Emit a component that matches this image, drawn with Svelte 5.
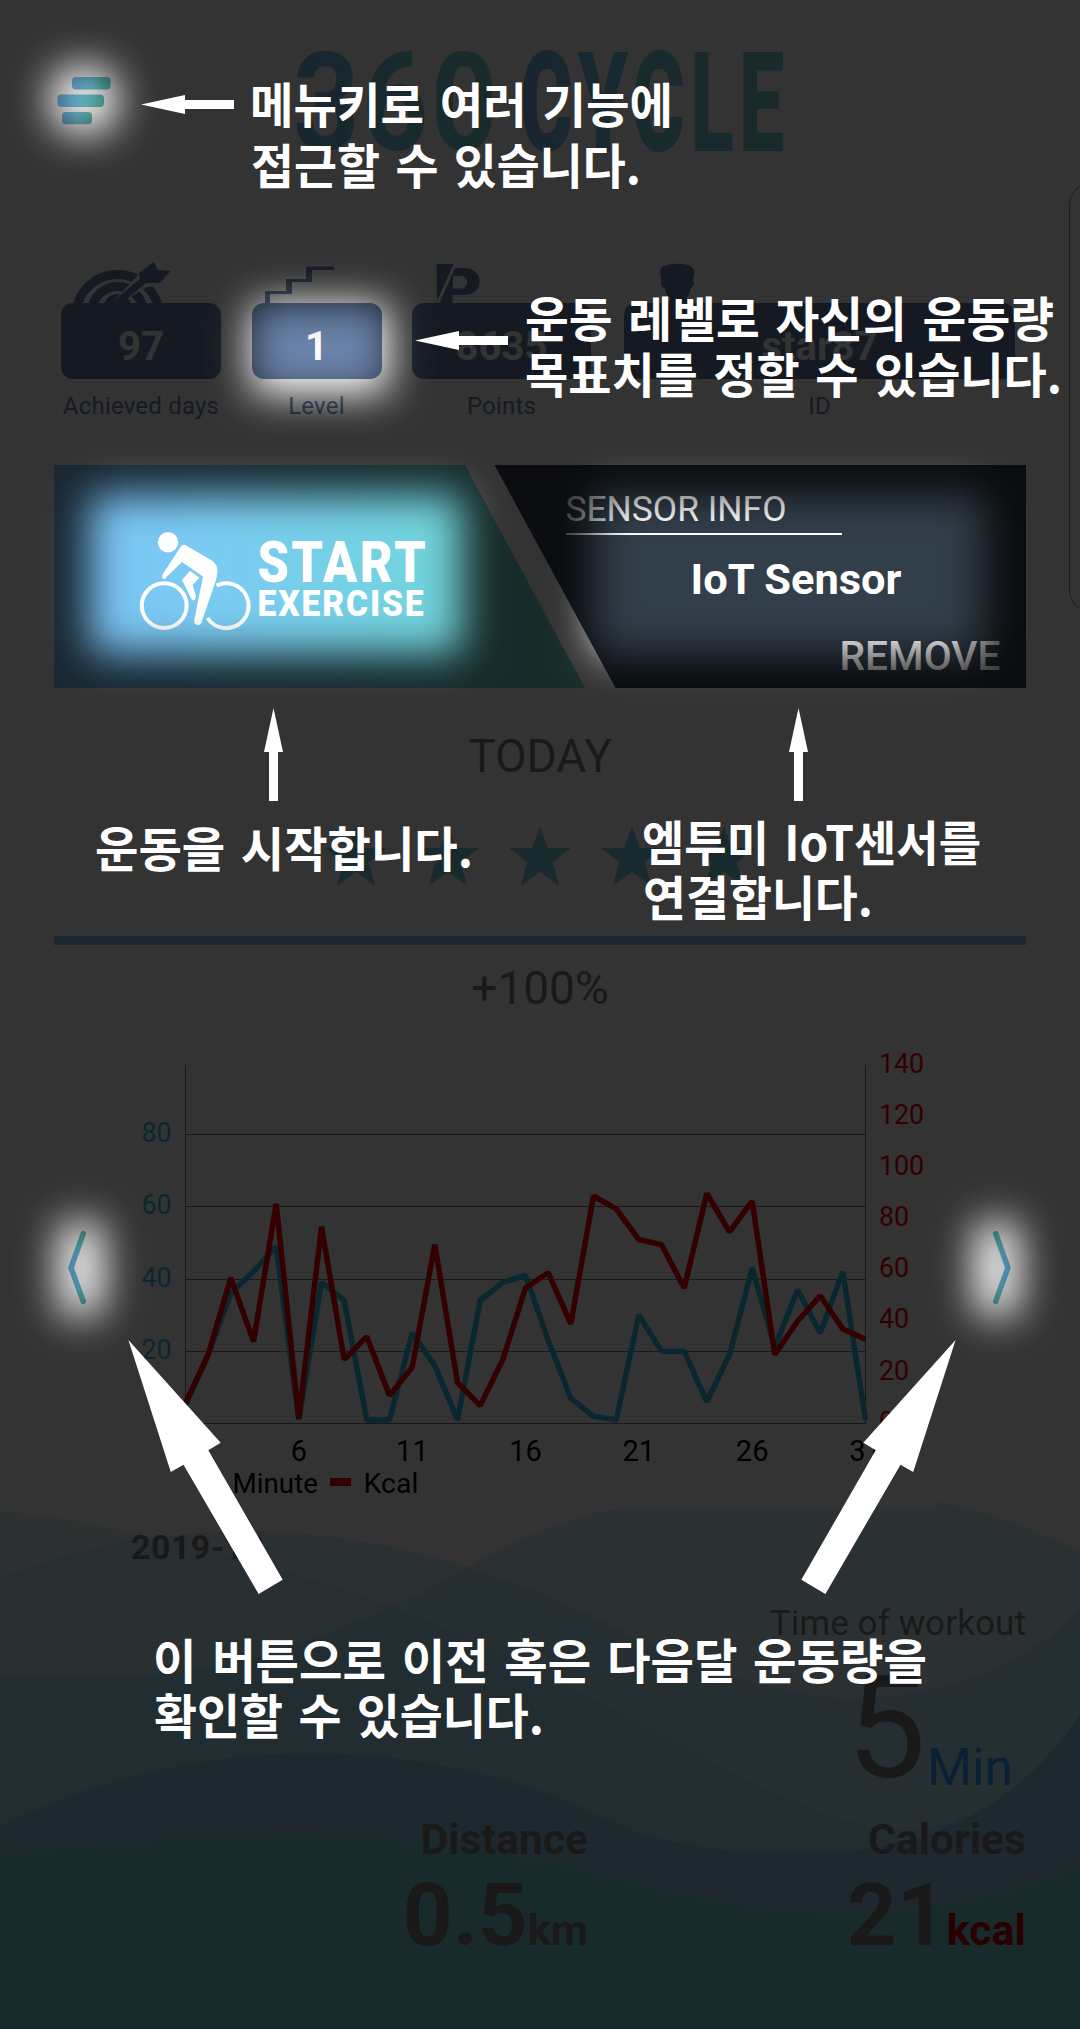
<script>
  const stats = [
    { icon: 'target', value: '97', label: 'Achieved days', width: 160 },
    { icon: 'stairs', value: '1', label: 'Level', width: 130 },
    { icon: 'points', value: '8635', label: 'Points', width: 179 },
    { icon: 'person', value: 'star87', label: 'ID', width: 391 }
  ];

  const minutes = [5, 19, 36, 42, 49, 1, 39, 34, 1, 1, 25, 16, 1, 34, 39, 41, 23, 7, 2, 1, 30, 20, 20, 6, 19, 43, 21, 37, 25, 42, 1];
  const kcal = [8, 27, 57, 32, 86, 2, 77, 25, 34, 11, 22, 70, 16, 7, 25, 53, 59, 39, 89, 84, 72, 70, 53, 90, 75, 87, 27, 40, 50, 37, 33];

  const left = 185.5;
  const right = 865.5;
  const base = 1423.5;
  const step = (right - left) / 30;
  const toPoints = (values, unit) =>
    values.map((v, i) => `${(left + i * step).toFixed(1)},${(base - v * unit).toFixed(1)}`).join(' ');
  const minuteLine = toPoints(minutes, 3.617);
  const kcalLine = toPoints(kcal, 2.556);

  const leftTicks = [20, 40, 60, 80];
  const rightTicks = [0, 20, 40, 60, 80, 100, 120, 140];
  const days = [6, 11, 16, 21, 26, 31];
  const stars = [1, 2, 3, 4, 5];

  const holes = [
    { x: 51, y: 67, w: 66, h: 66, r: 24 },
    { x: 251, y: 304, w: 138, h: 90, r: 10 },
    { x: 90, y: 495, w: 372, h: 158, r: 10 },
    { x: 594, y: 495, w: 390, h: 159, r: 12 },
    { x: 59, y: 1222, w: 44, h: 94, r: 12 },
    { x: 975, y: 1222, w: 44, h: 94, r: 12 }
  ];

  const notes = [
    { text: '메뉴키로 여러 기능에', x: 250, y: 123, w: 423 },
    { text: '접근할 수 있습니다.', x: 251, y: 184, w: 390 },
    { text: '운동 레벨로 자신의 운동량', x: 525, y: 337, w: 529 },
    { text: '목표치를 정할 수 있습니다.', x: 525, y: 392.5, w: 537 },
    { text: '운동을 시작합니다.', x: 95, y: 866.5, w: 378 },
    { text: '엠투미 IoT센서를', x: 642, y: 861, w: 339 },
    { text: '연결합니다.', x: 643, y: 916, w: 230 },
    { text: '이 버튼으로 이전 혹은 다음달 운동량을', x: 153, y: 1678.5, w: 774 },
    { text: '확인할 수 있습니다.', x: 154, y: 1733.5, w: 390 }
  ];
</script>

<main class="app">
  <svg class="waves" viewBox="0 1490 1080 539" aria-hidden="true">
    <path class="wave faint" d="M0 1511 C50 1515 95 1524 138 1534 C190 1545 225 1554 262 1565 C310 1578 350 1592 392 1607 C450 1627 495 1651 540 1674 C590 1697 635 1722 678 1743 C740 1775 800 1810 870 1826 C960 1842 1030 1790 1080 1714 V2029 H0Z" />
    <path class="wave" d="M0 1578 C80 1546 160 1531 255 1531 C335 1533 405 1547 468 1567 C500 1577 520 1585 540 1593 C600 1618 650 1647 700 1665 C745 1681 795 1698 855 1698 C945 1697 1030 1663 1080 1610 V2029 H0Z" />
    <path class="wave" d="M0 1674 C70 1681 130 1679 185 1671 C230 1664 262 1658 293 1645 C328 1634 358 1622 392 1607 C420 1595 445 1580 468 1567 C492 1552 516 1540 540 1532 C568 1521 592 1512 619 1508.6 H937 V1501.5 C990 1512 1038 1530 1080 1552 V2029 H0Z" />
    <path class="wave blue" d="M0 1826 C90 1780 200 1753 310 1753 C390 1753 470 1767 540 1790 C575 1802 609 1821 643 1834 C690 1847 735 1853 781 1853 C810 1853 840 1853 870 1848 C960 1834 1030 1790 1080 1714 V2029 H0Z" />
    <path class="wave teal" d="M0 1855 C100 1842 205 1835 310 1835 C345 1836 380 1838 413 1841 C460 1845 500 1852 540 1861 C600 1870 655 1890 712 1899 C755 1908 800 1913 850 1913 C930 1912 1005 1895 1080 1866 V2029 H0Z" />
  </svg>

  <header class="header">
    <svg class="menu" viewBox="57 77 54 48" aria-label="Menu">
      <defs>
        <linearGradient id="bar" x1="0" x2="1"><stop offset="0" stop-color="#76b8ea" /><stop offset=".5" stop-color="#70cbdc" /><stop offset="1" stop-color="#60c0b2" /></linearGradient>
      </defs>
      <rect x="72" y="77" width="38.5" height="12.5" rx="4" fill="url(#bar)" />
      <rect x="57.5" y="94.5" width="46.5" height="12.5" rx="4" fill="url(#bar)" />
      <rect x="62" y="112" width="30" height="12.3" rx="4" fill="url(#bar)" />
    </svg>
    <svg class="logo" viewBox="280 10 520 190" aria-label="360 CYCLE">
      <defs>
        <linearGradient id="num" x1="0" x2="1"><stop offset="0" stop-color="#78b9f0" /><stop offset=".5" stop-color="#78cfe6" /><stop offset="1" stop-color="#78d2c8" /></linearGradient>
        <linearGradient id="word" x1="0" x2="1"><stop offset="0" stop-color="#78b9f0" /><stop offset=".45" stop-color="#78cfe6" /><stop offset="1" stop-color="#78d2c8" /></linearGradient>
      </defs>
      <text class="num" x="293" y="150" textLength="207" lengthAdjust="spacingAndGlyphs" fill="url(#num)">360</text>
      <text class="word" x="520" y="150.500" textLength="269" lengthAdjust="spacingAndGlyphs" fill="url(#word)">CYCLE</text>
    </svg>
  </header>

  <section class="stats">
    {#each stats as s}
      <div class="stat" style:width="{s.width}px">
        <div class="glyph">
          {#if s.icon === 'target'}
            <svg viewBox="61 262 160 41">
              <g class="rings">
                <circle cx="117.5" cy="316" r="41.5" /><circle cx="117.5" cy="312" r="25.5" /><circle cx="117.5" cy="308" r="9.5" />
              </g>
              <path d="M117 301 L154 262 L171 270 L160 283 L146 285Z" fill="#fff" stroke="#fff" stroke-width="5" />
              <path class="shaft" d="M119 301 L150 275" />
              <path d="M138.500 273 L154 262 L158 270 L170.500 271 L160 283 L141 283Z" />
            </svg>
          {:else if s.icon === 'stairs'}
            <svg viewBox="252 262 130 41">
              <path d="M265 303V291H286V279H306V266.500H334V270H312V282H292V294H270V303Z" />
            </svg>
          {:else if s.icon === 'points'}
            <svg viewBox="412 262 179 41">
              <path d="M436.500 264H453.500L437 301Z" />
              <path fill-rule="evenodd" d="M455 268H464C485 268 485 295 464 295H452.500V303H439.500ZM453 276V288.500H461C469 288.500 469 276 461 276Z" />
            </svg>
          {:else}
            <svg viewBox="624 262 391 41">
              <path d="M661 268C666 263 688 262 693 268C695 272 694 277 693 280C695 283 694 287 691 288C690 293 688 295 687 298L689 303H668L670 298C667 295 665 292 664.600 288C661 287 660 283 661.500 280C660 276 660 272 661 268Z" />
            </svg>
          {/if}
        </div>
        <div class="tile">{s.value}</div>
        <div class="caption">{s.label}</div>
      </div>
    {/each}
  </section>

  <section class="banner">
    <svg viewBox="54 465 972 223">
      <defs>
        <linearGradient id="start" x1="0" x2="1"><stop offset="0" stop-color="#7cc2f6" /><stop offset=".3" stop-color="#7acbf2" /><stop offset=".7" stop-color="#72d4dd" /><stop offset="1" stop-color="#78d6c8" /></linearGradient>
      </defs>
      <path d="M54 465H465L585 688H54Z" fill="url(#start)" />
      <path d="M494.500 465H1026V688H615.500Z" fill="#323e4a" />
      <g fill="#fff">
        <circle cx="168" cy="542.300" r="10.200" />
        <path d="M180.500 547Q183 543 187 546L211 560Q218 564 217.500 572L216 580L202 621Q201 625.500 197.500 625Q193.500 624.500 194.300 620L203 576.500L182 562L166.500 577Q165.500 580 163 578.500Q161.500 577 162.600 574.500Z" />
        <path d="M190 570.700L199.500 577.800L192.500 585L195.800 595.500Q196 600 193 600.500L191.500 599L182 580Z" />
      </g>
      <g fill="none" stroke="#fff" stroke-width="4">
        <circle cx="164.200" cy="605.600" r="22.400" />
        <path d="M216.500 585.500A22.400 22.400 0 1 1 207.500 618" />
      </g>
      <g fill="#fff">
        <text class="start-word" x="257.500" y="582" textLength="171" lengthAdjust="spacingAndGlyphs">START</text>
        <text class="exercise-word" x="257.500" y="615.700" textLength="168" lengthAdjust="spacingAndGlyphs">EXERCISE</text>
      </g>
      <g fill="#fff">
        <text class="info" x="565.500" y="521" textLength="221" lengthAdjust="spacingAndGlyphs">SENSOR INFO</text>
        <rect x="566" y="533" width="276" height="2" />
        <text class="sensor" x="690.500" y="594" textLength="211" lengthAdjust="spacingAndGlyphs">IoT Sensor</text>
        <text class="remove" x="839.500" y="670" textLength="161" lengthAdjust="spacingAndGlyphs">REMOVE</text>
      </g>
    </svg>
  </section>

  <section class="today">
    <h2>TODAY</h2>
    <div class="stars">
      {#each stars as n (n)}
        <svg viewBox="0 0 62 60"><path d="M31 0L38.500 22H62L43.500 36.500L50.500 60L31 46L11.500 60L18.500 36.500L0 22H23.500Z" /></svg>
      {/each}
    </div>
  </section>
  <div class="progress"></div>
  <p class="percent">+100%</p>

  <section class="chart">
    <svg viewBox="0 1032 1080 478">
      <defs>
        <linearGradient id="chev" x1="0" x2="1"><stop offset="0" stop-color="#6cb8ee" /><stop offset="1" stop-color="#60c4bc" /></linearGradient>
        <linearGradient id="chevRight" x1="0" x2="1"><stop offset="0" stop-color="#60c4bc" /><stop offset="1" stop-color="#6cb8ee" /></linearGradient>
      </defs>
      <g stroke="#7a7a7a" stroke-width="1">
        {#each leftTicks as t (t)}
          <line x1={left} x2={right} y1={Math.round(base - t * 3.617) + 0.5} y2={Math.round(base - t * 3.617) + 0.5} />
        {/each}
        <line x1={left} x2={right} y1={base} y2={base} />
        <line x1={left} x2={left} y1="1065" y2="1424" />
        <line x1={right} x2={right} y1="1065" y2="1424" />
      </g>
      <g class="tick minute-tick">
        {#each leftTicks as t (t)}<text x="171.500" y={base - t * 3.617 + 8}>{t}</text>{/each}
      </g>
      <g class="tick kcal-tick">
        {#each rightTicks as t (t)}<text x="879" y={base - t * 2.556 + 7.2}>{t}</text>{/each}
      </g>
      <g class="day">
        {#each days as d (d)}<text x={left + (d - 1) * step} y="1461">{d}</text>{/each}
      </g>
      <polyline class="series" points={minuteLine} stroke="#32bee6" />
      <polyline class="series" points={kcalLine} stroke="#ff0000" />
      <rect x="200" y="1478" width="21" height="8" fill="#32bee6" />
      <text class="legend" x="232.500" y="1492.500" textLength="85.500" lengthAdjust="spacingAndGlyphs">Minute</text>
      <rect x="330" y="1478" width="21" height="8" fill="#ff0000" />
      <text class="legend" x="363.500" y="1492.500">Kcal</text>
      <path class="chevron" d="M83.300 1233.500L71 1267.700L83.300 1301.500" stroke="url(#chev)" />
      <path class="chevron" d="M995.700 1233.500L1008 1267.700L995.700 1301.500" stroke="url(#chevRight)" />
    </svg>
  </section>

  <section class="summary">
    <div class="date">2019-10</div>
    <div class="time-label">Time of workout</div>
    <div class="time"><span class="amount">5</span><span class="unit">Min</span></div>
    <div class="totals">
      <div class="total"><h3>Distance</h3><p>0.5<small>km</small></p></div>
      <div class="total"><h3>Calories</h3><p>21<small class="red">kcal</small></p></div>
    </div>
  </section>

  <aside class="next-card"></aside>

  <svg class="coach" viewBox="0 0 1080 2029">
    <defs>
      <filter id="soft" x="0" y="0" width="1080" height="2029" filterUnits="userSpaceOnUse" color-interpolation-filters="sRGB"><feGaussianBlur stdDeviation="20" /></filter>
      <mask id="spots" maskUnits="userSpaceOnUse" x="0" y="0" width="1080" height="2029">
        <rect width="1080" height="2029" fill="#fff" />
        <g filter="url(#soft)">
          {#each holes as h}<rect x={h.x} y={h.y} width={h.w} height={h.h} rx={h.r} fill="#000" />{/each}
        </g>
      </mask>
    </defs>
    <rect width="1080" height="2029" fill="#000" fill-opacity=".8" mask="url(#spots)" />
    <g fill="#fff">
      <path d="M141 104.500L185 95V100H234V109H185V114Z" />
      <path d="M415 340.400L459 331V336H508V345H459V350Z" />
      <path d="M273.500 708L283 752H278V801H269V752H264Z" />
      <path d="M798.500 708L808 752H803V801H794V752H789Z" />
      <path d="M128.400 1340L220.700 1442.700L208.300 1450.300L282.700 1579.700L258.600 1593.900L183.500 1464.700L170.800 1472Z" />
      <path d="M955.600 1340L863.300 1442.700L875.700 1450.300L801.300 1579.700L825.400 1593.900L900.500 1464.700L913.200 1472Z" />
      {#each notes as n}
        <text class="note" x={n.x} y={n.y} textLength={n.w} lengthAdjust="spacingAndGlyphs">{n.text}</text>
      {/each}
    </g>
  </svg>
</main>

<style>
  :global(body) { margin: 0; background: #fff; }
  .app {
    position: relative;
    width: 1080px;
    height: 2029px;
    overflow: hidden;
    background: #fff;
    font-family: Roboto, "Noto Sans CJK KR", sans-serif;
    color: #7f7f7f;
  }
  svg { display: block; }
  h2, h3, p { margin: 0; font-weight: 400; }
  .waves { position: absolute; left: 0; bottom: 0; width: 1080px; height: 539px; }
  .wave { fill: rgba(120, 210, 235, .3); }
  .wave.faint { fill: rgba(120, 190, 235, .2); }
  .wave.blue { fill: #98c9ec; }
  .wave.teal { fill: #7dd2e1; }

  .header { position: relative; display: flex; align-items: flex-start; height: 262px; }
  .menu { width: 54px; height: 48px; margin: 77px 0 0 57px; }
  .logo { width: 520px; height: 190px; margin: 10px 0 0 169px; }
  .num { font-size: 138px; font-weight: 700; letter-spacing: 3px; }
  .word { font-size: 139px; font-weight: 900; letter-spacing: 9px; }

  .stats { position: relative; display: grid; grid-template-columns: 190.5px 160.5px 212px 391px; height: 203px; padding-left: 61px; }
  .stat { text-align: center; color: #6b84ab; }
  .glyph { height: 41px; }
  .glyph svg { width: 100%; height: 41px; fill: #6b84ab; }
  .rings { fill: none; stroke: #6b84ab; stroke-width: 9; }
  .shaft { fill: none; stroke: #6b84ab; stroke-width: 7; stroke-linecap: round; }
  .tile { box-sizing: border-box; height: 76px; padding-top: 6px; line-height: 76px; border-radius: 12px; background: #6b84ab; color: #fff; font-size: 40px; font-weight: 700; }
  .caption { line-height: 54px; font-size: 24px; letter-spacing: .2px; }

  .banner { position: relative; height: 223px; margin: 0 54px; }
  .banner svg { width: 972px; height: 223px; }
  .start-word { font-size: 58px; font-weight: 900; letter-spacing: 3px; }
  .exercise-word { font-size: 36px; font-weight: 900; letter-spacing: 2px; }
  .info { font-size: 35.5px; }
  .sensor { font-size: 43px; font-weight: 700; }
  .remove { font-size: 40px; font-weight: 500; }

  .today { height: 248px; text-align: center; }
  .today h2 { font-size: 46px; line-height: 136px; }
  .stars { display: flex; justify-content: center; gap: 30px; padding-top: 2px; }
  .stars svg { width: 62px; height: 60px; fill: #78d2e6; }
  .progress { height: 9px; margin: 0 54px; background: #8cc6ee; }
  .percent { font-size: 46px; line-height: 87px; text-align: center; }

  .chart { position: relative; height: 478px; }
  .chart svg { width: 1080px; height: 478px; }
  .tick { font-size: 26.800px; }
  .tick.minute-tick { fill: #32bee6; text-anchor: end; }
  .tick.kcal-tick { fill: #f00; }
  .day { font-size: 29px; fill: #000; text-anchor: middle; }
  .legend { font-size: 28.500px; fill: #000; }
  .series { fill: none; stroke-width: 5.5; stroke-linejoin: bevel; }
  .chevron { fill: none; stroke-width: 5.5; stroke-linecap: round; stroke-linejoin: round; }

  .summary { position: relative; }
  .date { padding-left: 131px; font-size: 34px; line-height: 74px; font-weight: 700; letter-spacing: .4px; }
  .time-label { padding-right: 54px; text-align: right; font-size: 35px; line-height: 79px; height: 78px; letter-spacing: .1px; }
  .time { display: flex; justify-content: flex-end; align-items: flex-end; gap: 1px; padding-right: 67px; }
  .amount { font-size: 142px; line-height: 133px; }
  .unit { font-size: 51.500px; line-height: 55px; color: #2f9cff; }
  .totals { display: grid; grid-template-columns: 588px 438px; text-align: right; }
  .total h3 { font-size: 42.700px; line-height: 89px; font-weight: 700; }
  .total p { font-size: 87px; line-height: 62px; font-weight: 700; }
  .total small { font-size: 43px; line-height: 1; }
  .total .red { color: #c80000; }

  .next-card { position: absolute; left: 1069px; top: 183px; width: 60px; height: 429px; box-sizing: border-box; border: 1px solid #8c8c8c; border-radius: 22px; }
  .coach { position: absolute; left: 0; top: 0; width: 1080px; height: 2029px; }
  .note { font-family: "Noto Sans CJK KR", sans-serif; font-size: 48px; font-weight: 700; word-spacing: 5px; }
</style>
